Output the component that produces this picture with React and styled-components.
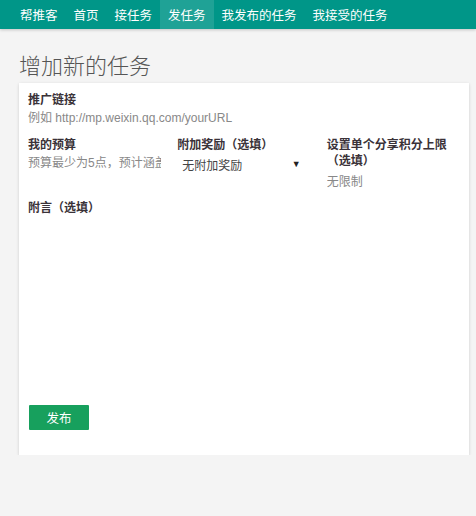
import React from "react";
import styled, { createGlobalStyle } from "styled-components";

const GlobalStyle = createGlobalStyle`
  html, body {
    margin: 0;
    padding: 0;
    background: #f4f4f4;
    font-family: "Liberation Sans", "Noto Sans CJK SC", sans-serif;
  }
`;

const NavBar = styled.nav`
  display: flex;
  height: 29px;
  padding-left: 12px;
  background-color: #009688;
  box-shadow: 0 1px 3px rgba(0, 0, 0, 0.2);
`;

const NavItem = styled.a`
  display: flex;
  align-items: center;
  padding: 0 8px;
  font-size: 12.5px;
  color: #fff;
  text-decoration: none;
  background-color: ${props => (props.active ? "rgba(255,255,255,0.12)" : "transparent")};
`;

const Title = styled.h1`
  margin: 23px 0 1px 19px;
  font-size: 22px;
  line-height: 30px;
  font-weight: 300;
  color: #555;
`;

const Card = styled.div`
  width: 450px;
  margin-left: 19px;
  padding: 9px 9px 25px;
  box-sizing: border-box;
  background: #fff;
  box-shadow: 0 1px 3px rgba(0, 0, 0, 0.16);
`;

const Field = styled.div`
  min-width: 0;
  margin-bottom: ${props => props.gap || 0}px;
`;

const Label = styled.div`
  font-size: 12px;
  line-height: 16px;
  font-weight: bold;
  color: #3a3238;
`;

const Input = styled.div`
  height: 20px;
  margin-top: ${props => props.offset || 0}px;
  line-height: 20px;
  font-size: 12px;
  color: #888;
  white-space: nowrap;
  overflow: hidden;
`;

const Row = styled.div`
  display: grid;
  grid-template-columns: repeat(3, minmax(0, 1fr));
  column-gap: 16px;
  margin-bottom: 8px;
`;

const Select = styled.div`
  display: flex;
  justify-content: space-between;
  align-items: center;
  height: 22px;
  padding: 0 10px 0 5px;
  font-size: 12px;
  color: #444;
`;

const Arrow = styled.span`
  font-size: 9px;
  color: #222;
`;

const TextArea = styled.div`
  height: 179px;
  margin-bottom: 10px;
`;

const Button = styled.button`
  width: 60px;
  height: 25px;
  margin-left: 1px;
  border: none;
  border-radius: 1px;
  background-color: #17a05d;
  color: #fff;
  font-size: 12.5px;
  font-family: inherit;
  cursor: pointer;
`;

const navItems = ["帮推客", "首页", "接任务", "发任务", "我发布的任务", "我接受的任务"];

const App = () => {
  return (
    <>
      <GlobalStyle />
      <NavBar>
        {navItems.map(item => (
          <NavItem key={item} active={item === "发任务"}>
            {item}
          </NavItem>
        ))}
      </NavBar>
      <Title>增加新的任务</Title>
      <Card>
        <Field gap={9}>
          <Label>推广链接</Label>
          <Input>例如 http://mp.weixin.qq.com/yourURL</Input>
        </Field>
        <Row>
          <Field>
            <Label>我的预算</Label>
            <Input>预算最少为5点，预计涵盖100人次</Input>
          </Field>
          <Field>
            <Label>附加奖励（选填）</Label>
            <Select>
              <span>无附加奖励</span>
              <Arrow>▼</Arrow>
            </Select>
          </Field>
          <Field>
            <Label>设置单个分享积分上限（选填）</Label>
            <Input offset={3}>无限制</Input>
          </Field>
        </Row>
        <Field>
          <Label>附言（选填）</Label>
          <TextArea />
        </Field>
        <Button>发布</Button>
      </Card>
    </>
  );
};

export default App;
